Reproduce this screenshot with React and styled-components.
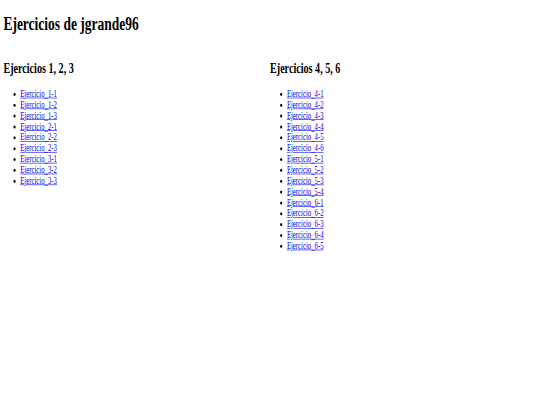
import React from 'react';
import styled, { createGlobalStyle } from 'styled-components';

const GlobalStyle = createGlobalStyle`
  html, body {
    margin: 0;
    padding: 0;
    overflow: hidden;
    background: #ffffff;
  }
`;

const Frame = styled.div`
  width: 100vw;
  height: 100vh;
  overflow: hidden;
`;

// the page was laid out for a 1280px wide window and shrunk into 540x405
const Scaler = styled.div`
  display: flow-root;
  width: 1280px;
  transform: scale(0.421875, 0.603);
  transform-origin: top left;
  font-family: "Liberation Serif", "Times New Roman", serif;
  color: #000;
`;

const Page = styled.div`
  margin: 8px;
`;

const Title = styled.h1`
  font-size: 32px;
  margin: 21.44px 0;
`;

const Columns = styled.div`
  display: flex;
`;

const Column = styled.section`
  flex: 1;
`;

const Subtitle = styled.h2`
  font-size: 24px;
  margin: 19.92px 0;
`;

const List = styled.ul`
  margin: 16px 0;
  padding-left: 40px;
  list-style: disc;
  font-size: 16px;
`;

const Link = styled.a`
  color: #0000ee;
  text-decoration: underline;
`;

const groups = [
  {
    title: 'Ejercicios 1, 2, 3',
    items: ['1-1', '1-2', '1-3', '2-1', '2-2', '2-3', '3-1', '3-2', '3-3'],
  },
  {
    title: 'Ejercicios 4, 5, 6',
    items: [
      '4-1', '4-2', '4-3', '4-4', '4-5', '4-6',
      '5-1', '5-2', '5-3', '5-4',
      '6-1', '6-2', '6-3', '6-4', '6-5',
    ],
  },
];

const App = () => {
  return (
    <Frame>
      <GlobalStyle />
      <Scaler>
        <Page>
          <Title>Ejercicios de jgrande96</Title>
          <Columns>
            {groups.map((group) => (
              <Column key={group.title}>
                <Subtitle>{group.title}</Subtitle>
                <List>
                  {group.items.map((item) => (
                    <li key={item}>
                      <Link href={`#ejercicio_${item}`}>Ejercicio_{item}</Link>
                    </li>
                  ))}
                </List>
              </Column>
            ))}
          </Columns>
        </Page>
      </Scaler>
    </Frame>
  );
};

export default App;
